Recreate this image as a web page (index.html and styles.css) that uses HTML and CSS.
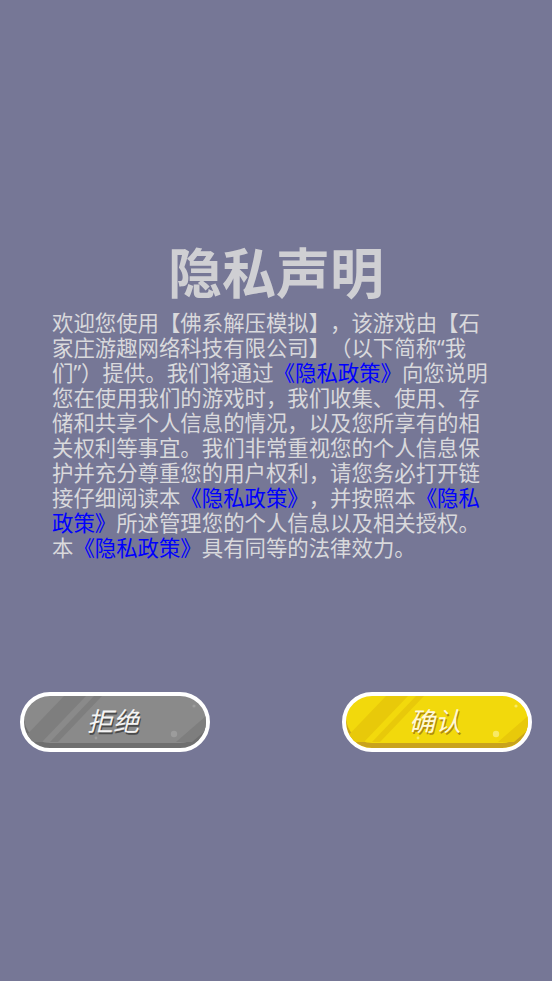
FILE: index.html
```html
<!DOCTYPE html>
<html lang="zh-CN">
<head>
<meta charset="utf-8">
<link rel="stylesheet" href="styles.css">
</head>
<body>
<div class="page">
  <h1 class="title">隐私声明</h1>
  <div class="text">
    <div class="line">欢迎您使用【佛系解压模拟】，该游戏由【石</div>
    <div class="line">家庄游趣网络科技有限公司】（以下简称“我</div>
    <div class="line">们”）提供。我们将通过<span class="link">《隐私政策》</span>向您说明</div>
    <div class="line">您在使用我们的游戏时，我们收集、使用、存</div>
    <div class="line">储和共享个人信息的情况，以及您所享有的相</div>
    <div class="line">关权利等事宜。我们非常重视您的个人信息保</div>
    <div class="line">护并充分尊重您的用户权利，请您务必打开链</div>
    <div class="line">接仔细阅读本<span class="link">《隐私政策》</span>，并按照本<span class="link">《隐私</span></div>
    <div class="line"><span class="link">政策》</span>所述管理您的个人信息以及相关授权。</div>
    <div class="line">本<span class="link">《隐私政策》</span>具有同等的法律效力。</div>
  </div>
  <div class="buttons">
    <div class="btn btn-gray">
      <svg class="deco" viewBox="0 0 182 52" preserveAspectRatio="none">
        <polygon points="40,0 62,0 18,46 -4,46" class="stripe-a"/>
        <polygon points="70,0 78,0 34,46 26,46" class="stripe-b"/>
        <polygon points="182,20 182,34 168,46 152,46" class="stripe-a"/>
        <circle cx="170" cy="10" r="1.6" class="dot"/>
        <circle cx="150" cy="38" r="3.2" class="dot"/>
        <circle cx="72" cy="42" r="1.4" class="dot"/>
      </svg>
      <span class="label">拒绝</span>
    </div>
    <div class="btn btn-yellow">
      <svg class="deco" viewBox="0 0 182 52" preserveAspectRatio="none">
        <polygon points="40,0 62,0 18,46 -4,46" class="stripe-a"/>
        <polygon points="70,0 78,0 34,46 26,46" class="stripe-b"/>
        <polygon points="182,20 182,34 168,46 152,46" class="stripe-a"/>
        <circle cx="170" cy="10" r="1.6" class="dot"/>
        <circle cx="150" cy="38" r="3.2" class="dot"/>
        <circle cx="72" cy="42" r="1.4" class="dot"/>
      </svg>
      <span class="label">确认</span>
    </div>
  </div>
</div>
</body>
</html>
```
FILE: styles.css
```css
html, body {
  margin: 0;
  padding: 0;
  background: #767796;
}
body {
  font-family: "Noto Sans", "Noto Sans CJK SC", sans-serif;
  width: 552px;
  height: 981px;
  overflow: hidden;
}
.page {
  display: flex;
  flex-direction: column;
  align-items: center;
  padding-top: 236px;
}
.title {
  margin: 0;
  font-family: "Noto Sans CJK SC", sans-serif;
  font-size: 54px;
  line-height: 70px;
  font-weight: 700;
  color: #cfcfd3;
}
.text {
  align-self: flex-start;
  margin: 4px 0 0 52px;
  width: 460px;
  font-size: 21.4px;
  color: #d9d9dc;
  text-spacing-trim: space-all;
}
.line {
  height: 25px;
  line-height: 25px;
  white-space: nowrap;
}
.link {
  color: #0000ff;
}
.buttons {
  align-self: stretch;
  display: flex;
  justify-content: space-between;
  padding: 0 20px;
  margin-top: 132px;
}
.btn {
  position: relative;
  width: 182px;
  height: 52px;
  border: 4px solid #ffffff;
  border-radius: 30px;
  overflow: hidden;
  display: flex;
  align-items: center;
  justify-content: center;
}
.deco {
  position: absolute;
  left: 0;
  top: 0;
  width: 100%;
  height: 100%;
}
.btn-gray {
  background: #8a8a8a;
  box-shadow: inset 0 -5px 0 #6f6f6f;
}
.btn-gray .stripe-a { fill: #7e7e7e; }
.btn-gray .stripe-b { fill: #7e7e7e; }
.btn-gray .dot { fill: #9c9c9c; }
.btn-yellow {
  background: #f2d90c;
  box-shadow: inset 0 -5px 0 #c9a31c;
}
.btn-yellow .stripe-a { fill: #e8c90a; }
.btn-yellow .stripe-b { fill: #e8c90a; }
.btn-yellow .dot { fill: #f8ea66; }
.label {
  position: relative;
  font-family: "Noto Sans CJK SC", sans-serif;
  font-size: 26px;
  line-height: 30px;
  font-style: italic;
  color: #f4f4f4;
  margin: -4px 0 0 -4px;
}
.btn-gray .label {
  text-shadow: 1px 2px 0 #4a4a4a;
}
.btn-yellow .label {
  color: #fff8d8;
  text-shadow: 1px 2px 0 #b08a10;
}
```
